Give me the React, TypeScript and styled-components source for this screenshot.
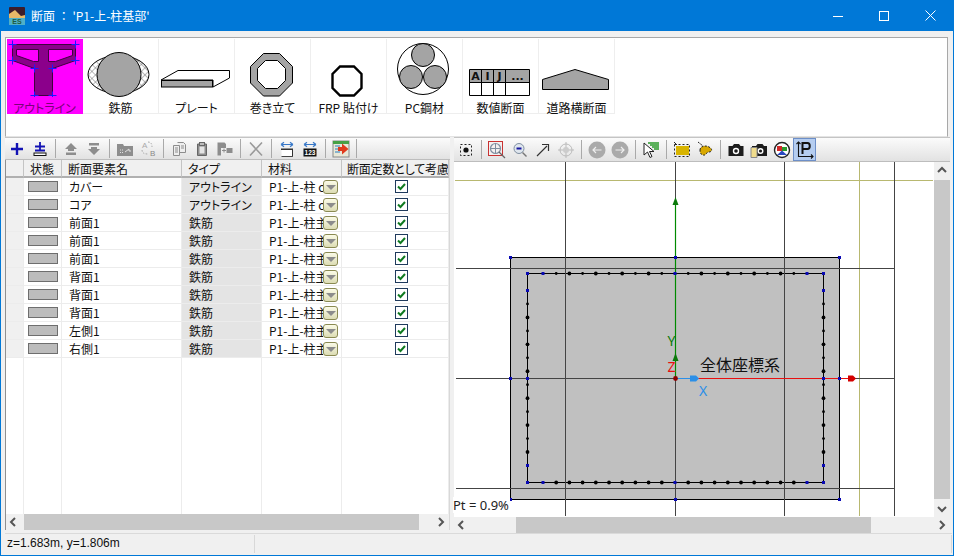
import styled, { createGlobalStyle } from "styled-components";
import { ReactNode } from "react";

const GlobalStyle = createGlobalStyle`
    html, body {
        margin: 0;
        padding: 0;
        background: #f0f0f0;
        overflow: hidden;
    }
    * {
        box-sizing: border-box;
    }
`

const FONT = `"Noto Sans CJK JP", "Noto Sans", sans-serif`;

const Window = styled.div`
    width: 954px;
    height: 556px;
    display: flex;
    flex-direction: column;
    background: #f0f0f0;
    border: 1px solid #0078d7;
    border-top: 0;
    font-family: ${FONT};
    font-feature-settings: "palt";
    font-size: 12px;
    color: #111;
`

const TitleBar = styled.header`
    height: 31px;
    flex: none;
    margin: 0 -1px;
    padding-left: 9px;
    display: flex;
    align-items: center;
    background: #0078d7;
    color: #fff;
`

const TitleText = styled.span`
    flex: 1;
    margin-left: 6px;
    font-size: 12px;
    font-feature-settings: normal;
    line-height: 31px;
`

const CaptionButtons = styled.div`
    display: flex;
    margin-right: 1px;
`

const CaptionButton = styled.button`
    width: 46px;
    height: 31px;
    border: 0;
    padding: 0;
    background: transparent;
    display: flex;
    align-items: center;
    justify-content: center;
`

const Ribbon = styled.nav`
    height: 100px;
    flex: none;
    margin: 6px 5px 0 4px;
    padding: 1px 0 0 1px;
    display: flex;
    align-items: flex-start;
    background: #fff;
    border: 1px solid #a8a8a8;
    border-bottom-color: #e4e4e4;
`

const RibbonItem = styled.div<{ $active?: boolean }>`
    width: 76px;
    height: 75px;
    display: flex;
    flex-direction: column;
    align-items: center;
    background: ${({ $active }) => ($active ? "#ff00ff" : "#fff")};
    color: ${({ $active }) => ($active ? "#7a007a" : "#111")};
    border-right: 1px solid ${({ $active }) => ($active ? "#ff00ff" : "#eeeeee")};
    border-bottom: 1px solid ${({ $active }) => ($active ? "#ff00ff" : "#eeeeee")};
    svg {
        display: block;
        flex: none;
    }
`

const RibbonLabel = styled.span`
    font-size: 12px;
    line-height: 14px;
    margin-top: 4px;
    white-space: nowrap;
`

const Split = styled.main`
    flex: 1;
    min-height: 0;
    display: grid;
    grid-template-columns: 445px 496px;
    column-gap: 4px;
    margin: 0 4px 0 4px;
`

const Pane = styled.section`
    min-width: 0;
    min-height: 0;
    display: flex;
    flex-direction: column;
`

const ToolBar = styled.div<{ $tall?: boolean }>`
    height: ${({ $tall }) => ($tall ? "25px" : "23px")};
    flex: none;
    display: flex;
    align-items: center;
    background: linear-gradient(#fbfbfb, #e2e2e2);
    border-top: 1px solid #c4c4c4;
    border-bottom: 1px solid #bdbdbd;
`

const ToolButton = styled.div<{ $on?: boolean }>`
    width: 23px;
    height: ${({ $on }) => ($on ? "23px" : "21px")};
    flex: none;
    display: flex;
    align-items: center;
    justify-content: center;
    background: ${({ $on }) => ($on ? "#b5cdf0" : "transparent")};
    border: 1px solid ${({ $on }) => ($on ? "#6d8fc8" : "transparent")};
`

const ToolSep = styled.div`
    width: 8px;
    height: 19px;
    flex: none;
    display: flex;
    justify-content: center;
    &:after {
        content: "";
        width: 1px;
        height: 100%;
        background: #a9a9a9;
    }
`

const GridFrame = styled.div`
    flex: 1;
    min-height: 0;
    display: flex;
    flex-direction: column;
    background: #fff;
    border-left: 1px solid #8f8f8f;
    border-right: 1px solid #d8d8d8;
`

const Row = styled.div<{ $fill?: boolean }>`
    display: grid;
    grid-template-columns: 18px 38px 120px 80px 80px 107px;
    height: 18px;
    flex: ${({ $fill }) => ($fill ? "1" : "none")};
`

const HeadCell = styled.div<{ $tight?: boolean }>`
    padding-left: ${({ $tight }) => ($tight ? "5px" : "6px")};
    line-height: 18px;
    letter-spacing: ${({ $tight }) => ($tight ? "-0.2px" : "0")};
    white-space: nowrap;
    overflow: hidden;
    background: #f0f0f0;
    border-right: 1px solid #c4c4c4;
    border-bottom: 2px solid #b0b0b0;
`

const Cell = styled.div<{ $tone?: "head" | "type" }>`
    padding-left: 7px;
    line-height: 17px;
    white-space: nowrap;
    overflow: hidden;
    position: relative;
    display: flex;
    align-items: center;
    background: ${({ $tone }) => ($tone === "head" ? "#f0f0f0" : $tone === "type" ? "#e4e4e4" : "#fff")};
    border-right: 1px solid #ececec;
    border-bottom: 1px solid #ececec;
`

const EmptyCell = styled.div`
    background: #fff;
    border-right: 1px solid #ececec;
`

const Swatch = styled.div`
    width: 30px;
    height: 11px;
    margin-left: -3px;
    background: #bcbcbc;
    border: 1px solid #6e6e6e;
`

const MaterialText = styled.span`
    display: block;
    width: 54px;
    overflow: hidden;
`

const DropButton = styled.div`
    position: absolute;
    right: 3px;
    top: 2px;
    width: 15px;
    height: 14px;
    display: flex;
    align-items: center;
    justify-content: center;
    background: linear-gradient(#fbfbe8, #dcdcb4);
    border: 1px solid #8a8a52;
    border-radius: 3px;
    &:after {
        content: "";
        border-top: 5px solid #8c8c8c;
        border-left: 5px solid transparent;
        border-right: 5px solid transparent;
    }
`

const CheckBox = styled.div`
    width: 13px;
    height: 13px;
    margin: 0 auto;
    position: relative;
    left: 3px;
    display: flex;
    background: #fff;
    border: 1px solid #1f3a5c;
`

const ScrollBar = styled.div<{ $vertical?: boolean }>`
    flex: none;
    display: flex;
    flex-direction: ${({ $vertical }) => ($vertical ? "column" : "row")};
    width: ${({ $vertical }) => ($vertical ? "16px" : "auto")};
    height: ${({ $vertical }) => ($vertical ? "auto" : "16px")};
    background: #f0f0f0;
`

const ScrollArrow = styled.div`
    flex: none;
    width: 16px;
    height: 16px;
    display: flex;
    align-items: center;
    justify-content: center;
`

const ScrollTrack = styled.div<{ $vertical?: boolean; $before: number; $after: number }>`
    flex: 1;
    min-width: 0;
    min-height: 0;
    margin: ${({ $vertical, $before, $after }) =>
        $vertical ? `${$before}px 0 ${$after}px` : `0 ${$after}px 0 ${$before}px`};
    background: #c8c8c8;
`

const LeftScroll = styled(ScrollBar)`
    margin: 0 0 3px;
    border-left: 1px solid #8f8f8f;
    border-right: 1px solid #d8d8d8;
`

const CanvasRow = styled.div`
    flex: 1;
    min-height: 0;
    display: flex;
`

const Canvas = styled.div`
    flex: 1;
    position: relative;
    background: #fff;
    svg {
        display: block;
    }
`

const RatioLabel = styled.span`
    position: absolute;
    left: -1px;
    bottom: 4px;
    padding: 0 1px 0 0;
    background: #fff;
    font-family: "Noto Sans", sans-serif;
    font-size: 13px;
    line-height: 16px;
    color: #222;
`

const StatusBar = styled.footer`
    height: 20px;
    flex: none;
    margin: 0 1px 2px 4px;
    display: flex;
    align-items: center;
    background: #f0f0f0;
    border-top: 1px solid #dadada;
`

const StatusCell = styled.div<{ $width?: number }>`
    width: ${({ $width }) => ($width ? `${$width}px` : "auto")};
    flex: ${({ $width }) => ($width ? "none" : "1")};
    height: 18px;
    padding-left: 2px;
    line-height: 17px;
    font-family: "Liberation Sans", sans-serif;
    font-size: 12px;
    border-right: 1px solid #d8d8d8;
`

const Ico = ({ children, w = 16, h = 16 }: { children: ReactNode; w?: number; h?: number }) => (
    <svg width={w} height={h} viewBox={`0 0 ${w} ${h}`}>{children}</svg>
);

const Shot = ({ x, children }: { x: number; children: ReactNode }) => (
    <svg width={76} height={58} viewBox={`${x} 39 76 58`}>{children}</svg>
);

const Cross = ({ x, y }: { x: number; y: number }) => (
    <path d={`M${x - 4} ${y}h8M${x} ${y - 4}v8`} stroke="#1a1aff" strokeWidth="1" />
);

const ribbon = [
    {
        label: "アウトライン", x: 7, active: true, art: (
            <>
                <path d="M12.5 44.5H75.5V60.5L52.5 68.5V95.5H34.5V68.5L12.5 60.5Z" fill="#8b008b" stroke="#400040" strokeWidth="1" />
                <path d="M16.5 49.5H38.5V61.5H33.5L16.5 55.5Z M48.5 49.5H72.5V55.5L55.5 61.5H48.5Z" fill="#ff00ff" stroke="#400040" strokeWidth="1" />
                <Cross x={12.5} y={44.5} /><Cross x={75.5} y={44.5} /><Cross x={12.5} y={60.5} /><Cross x={75.5} y={60.5} />
                <Cross x={34.5} y={68.5} /><Cross x={52.5} y={68.5} /><Cross x={34.5} y={95.5} /><Cross x={52.5} y={95.5} />
            </>
        )
    },
    {
        label: "鉄筋", x: 83, art: (
            <>
                <defs>
                    <pattern id="hatch" width="5" height="5" patternUnits="userSpaceOnUse" patternTransform="rotate(45)">
                        <path d="M0 0H5M0 0V5" stroke="#555" strokeWidth="0.8" />
                    </pattern>
                </defs>
                <ellipse cx="118.5" cy="74.5" rx="30.5" ry="19" fill="url(#hatch)" stroke="#000" />
                <circle cx="119" cy="74.5" r="22" fill="#a4a4a4" stroke="#000" />
            </>
        )
    },
    {
        label: "プレート", x: 159, art: (
            <>
                <path d="M161 80L178 70.5H229.5V78L213 87V80Z" fill="#fff" stroke="#000" />
                <rect x="161.5" y="80.5" width="51" height="6.5" fill="#a4a4a4" stroke="#000" />
            </>
        )
    },
    {
        label: "巻き立て", x: 235, art: (
            <path fillRule="evenodd" d="M263.5 53.5H279.5L292.5 66.5V83L279.5 96H263.5L250.5 83V66.5Z M265.5 60.5H277.5L285.5 68.5V80.5L277.5 88.5H265.5L257.5 80.5V68.5Z" fill="#a4a4a4" stroke="#000" />
        )
    },
    {
        label: "FRP 貼付け", x: 311, art: (
            <path d="M340 66.5H354L361.5 74V88L354 95.5H340L332.5 88V74Z" fill="#fff" stroke="#000" strokeWidth="2.4" />
        )
    },
    {
        label: "PC鋼材", x: 387, art: (
            <>
                <circle cx="423" cy="69" r="25.5" fill="#fff" stroke="#000" />
                <circle cx="423" cy="55" r="11.5" fill="#a4a4a4" stroke="#000" />
                <circle cx="411" cy="77" r="11.5" fill="#a4a4a4" stroke="#000" />
                <circle cx="435" cy="77" r="11.5" fill="#a4a4a4" stroke="#000" />
            </>
        )
    },
    {
        label: "数値断面", x: 463, art: (
            <>
                <rect x="469.5" y="69.5" width="60" height="13" fill="#a4a4a4" />
                <path d="M469.5 69.5H529.5V95.5H469.5ZM469.5 82.5H529.5M481.5 69.5V95.5M493.5 69.5V95.5M505.5 69.5V95.5" fill="none" stroke="#000" />
                <g fontFamily='"DejaVu Sans", sans-serif' fontWeight="bold" fontSize="11" textAnchor="middle" fill="#111">
                    <text x="475.5" y="80">A</text>
                    <text x="487.5" y="80">I</text>
                    <text x="499.5" y="80">J</text>
                    <text x="517.5" y="80">...</text>
                </g>
            </>
        )
    },
    {
        label: "道路横断面", x: 539, art: (
            <path d="M542.5 79.5L575 69.5L608.5 79.5V89.5H542.5Z" fill="#a4a4a4" stroke="#000" />
        )
    },
];

const rows = [
    ["カバー", "アウトライン", "P1-上-柱 c"],
    ["コア", "アウトライン", "P1-上-柱 c"],
    ["前面1", "鉄筋", "P1-上-柱主"],
    ["前面1", "鉄筋", "P1-上-柱主"],
    ["前面1", "鉄筋", "P1-上-柱主"],
    ["背面1", "鉄筋", "P1-上-柱主"],
    ["背面1", "鉄筋", "P1-上-柱主"],
    ["背面1", "鉄筋", "P1-上-柱主"],
    ["左側1", "鉄筋", "P1-上-柱主"],
    ["右側1", "鉄筋", "P1-上-柱主"],
];

const GRAY = "#8d8d8d";

const leftTools: (ReactNode | null)[] = [
    <Ico><path d="M8 2V14M2 8H14" stroke="#1212b4" strokeWidth="2.4" /></Ico>,
    <Ico><path d="M8 1V10M3 5.5H13M3 9.5H13" stroke="#1212b4" strokeWidth="1.8" /><rect x="2" y="12" width="12" height="2.5" fill="#fff" stroke="#111" strokeWidth="1" /></Ico>,
    null,
    <Ico><path d="M8 2L14 8H11V10H5V8H2Z M3 11.5H13V14H3Z" fill={GRAY} /></Ico>,
    <Ico><path d="M8 14L14 8H11V6H5V8H2Z M3 2H13V4.5H3Z" fill={GRAY} /></Ico>,
    null,
    <Ico w={18} h={16}><path d="M1 3H7L8 5H17V15H1Z" fill={GRAY} /><path d="M4 9H8M4 11.5H8" stroke="#e0e0e0" strokeDasharray="1 1" /><path d="M9 11L13 8V10H15" stroke="#e0e0e0" fill="none" /></Ico>,
    <Ico w={18} h={18}><text x="3" y="8" fontSize="8" fontFamily="Liberation Sans" fill="#aaa">A</text><text x="11" y="16" fontSize="8" fontFamily="Liberation Sans" fill="#888">B</text><path d="M9 2C12 2 13 4 13 7M3 10C3 13 5 14 9 14" fill="none" stroke="#aaa" strokeDasharray="1.5 1.5" /></Ico>,
    null,
    <Ico><path d="M2.5 4.5H8.5V14.5H2.5Z M6.5 1.5H12.5L14.5 3.5V11.5H8.5" fill="#eee" stroke={GRAY} /><path d="M4 7H7M4 9H7M4 11H7M10 5H13M10 7H13" stroke={GRAY} /></Ico>,
    <Ico><path d="M3.5 3H12.5V14.5H3.5Z" fill={GRAY} stroke="#666" /><rect x="5.5" y="5.5" width="5" height="7" fill="#e4e4e4" /><rect x="5.5" y="1.5" width="5" height="3" fill="#bbb" stroke="#666" /></Ico>,
    <Ico w={18} h={16}><path d="M1.5 1.5H8.5L10 3V7H5V14.5H1.5Z" fill={GRAY} /><path d="M6 9.5H10M8 7.5V11.5" stroke={GRAY} /><rect x="10.5" y="7" width="6" height="5" fill={GRAY} /></Ico>,
    null,
    <Ico w={18} h={16}><path d="M3 1.5L15 14.5M15 1.5L3 14.5" stroke="#9a9a9a" strokeWidth="1.6" /></Ico>,
    null,
    <Ico><path d="M2 3.5H14M2 3.5L5 1.2M2 3.5L5 5.8M14 3.5L11 1.2M14 3.5L11 5.8" stroke="#3878c8" fill="none" strokeWidth="1.2" /><path d="M2.5 8.5H13.5V15.5H2.5" fill="#fff" stroke="#444" /><rect x="2" y="7.5" width="12" height="1.5" fill="#333" /><path d="M13.5 8V15.5" stroke="#333" /></Ico>,
    <Ico><path d="M2 3.5H14M2 3.5L5 1.2M2 3.5L5 5.8M14 3.5L11 1.2M14 3.5L11 5.8" stroke="#3878c8" fill="none" strokeWidth="1.2" /><rect x="1.5" y="7.5" width="13" height="8" fill="#111" /><text x="2.6" y="14.4" fontSize="6.5" fontWeight="bold" fontFamily="Liberation Sans" fill="#fff">123</text></Ico>,
    null,
    <Ico w={18} h={18}><rect x="1" y="1" width="16" height="16" fill="#e8e8d8" stroke="#888" /><rect x="1" y="1" width="16" height="3" fill="#46a046" /><path d="M3 6H8M3 9H8M3 12H8" stroke="#6aa0c8" strokeWidth="1.5" /><path d="M6 7H10V3.5L16.5 9L10 14.5V11H6Z" fill="#e03a1c" /></Ico>,
    null,
];

const BLUEGRAY = "#7e8ea0";

const rightTools: ReactNode[] = [
    <Ico><rect x="2.5" y="2.5" width="11" height="11" fill="none" stroke="#222" strokeDasharray="2 2" /><circle cx="8" cy="8" r="2.6" fill="#111" /></Ico>,
    null,
    <Ico w={18} h={18}><rect x="0.5" y="0.5" width="14" height="14" fill="#f4f0f0" stroke="#c83232" /><circle cx="7.5" cy="7.5" r="5" fill="none" stroke={BLUEGRAY} strokeWidth="1.2" /><path d="M2.5 7.5H12.5M7.5 2.5V12.5" stroke={BLUEGRAY} /><path d="M11 11L17 17" stroke="#666" strokeWidth="1.2" /></Ico>,
    <Ico><circle cx="7" cy="6.5" r="5" fill="#dfe6ee" stroke={BLUEGRAY} /><path d="M4.5 6.5H9.5" stroke="#1616a0" strokeWidth="2" /><path d="M10.5 10.5L14.5 14.5" stroke="#777" strokeWidth="1.4" /></Ico>,
    <Ico><path d="M2 14L12 4M7 2.5H13.5V9" fill="none" stroke="#333" strokeWidth="1.2" /></Ico>,
    <Ico w={18} h={18}><circle cx="9" cy="9" r="6" fill="none" stroke="#bbb" /><path d="M1 9H17M9 1V17" stroke="#bbb" /><circle cx="9" cy="9" r="3" fill="#ccc" /></Ico>,
    null,
    <Ico w={18} h={18}><circle cx="9" cy="9" r="8.5" fill="#aaa" /><path d="M13.5 9H5M8 6L5 9L8 12" fill="none" stroke="#eee" strokeWidth="1.2" /></Ico>,
    <Ico w={18} h={18}><circle cx="9" cy="9" r="8.5" fill="#aaa" /><path d="M4.5 9H13M10 6L13 9L10 12" fill="none" stroke="#eee" strokeWidth="1.2" /></Ico>,
    null,
    <Ico w={18} h={18}><path d="M2 2L2 14L5.5 11L8 16.5L10 15.5L7.5 10.5H12Z" fill="#fff" stroke="#222" /><path d="M6 2H17M8 4H17M10 6H17M12 8H17" stroke="#2a9a2a" strokeWidth="1.3" /></Ico>,
    null,
    <Ico w={18} h={18}><rect x="3" y="5" width="13" height="9" fill="#d8b400" /><path d="M1.5 3.5H16.5V15.5H1.5Z" fill="none" stroke="#222" strokeDasharray="2 2" /><path d="M1 1L4 4" stroke="#222" /></Ico>,
    <Ico w={18} h={18}><path d="M4 9C4 5 10 4 13 6C17 8 16 11 13 11C10 11 10 15 7 14C4 13 4 11 4 9Z" fill="#d8a800" stroke="#222" strokeDasharray="2 1.4" /><path d="M2 1L7 5" stroke="#222" strokeDasharray="2 1" /></Ico>,
    null,
    <Ico w={18} h={18}><path d="M1.5 5H5.5L7 3H12L13.5 5H16.5V15H1.5Z" fill="#1c1c1c" /><circle cx="9" cy="10" r="3.2" fill="#fff" /><circle cx="9" cy="10" r="1.8" fill="#1c1c1c" /></Ico>,
    <Ico w={18} h={18}><path d="M2 5H6L7.5 3H12.5L14 5H17V15H2Z" fill="#1c1c1c" /><circle cx="10.5" cy="10" r="3" fill="#fff" /><circle cx="10.5" cy="10" r="1.6" fill="#1c1c1c" /><path d="M1 6.5H7V16.5H1Z" fill="#f0dc8c" stroke="#888" /></Ico>,
    <Ico w={18} h={18}><circle cx="9" cy="9" r="7.5" fill="#fff" stroke="#222" strokeWidth="1.4" /><rect x="4" y="5" width="5" height="5" fill="#d02828" /><rect x="9" y="6" width="5" height="4" fill="#2a9a2a" /><path d="M4 14L9 9.5L14 14Z" fill="#2848c0" /></Ico>,
];

const Dot = ({ x, y, blue, r = 1.7 }: { x: number; y: number; blue?: boolean; r?: number }) =>
    blue ? <rect x={x - 1.5} y={y - 1.5} width="3" height="3" fill="#0a0ab4" /> : <circle cx={x} cy={y} r={r} fill="#000" />;

const xs = Array.from({ length: 21 }, (_, i) => 543 + i * 13.2);
const ys = Array.from({ length: 14 }, (_, i) => 290.5 + i * 13.46);

const Section = () => (
    <svg width="479" height="354" viewBox="454 162 479 354">
        <path d="M510.5 257.5H839.5V499.5H510.5Z" fill="#c0c0c0" stroke="#000" strokeWidth="1" />
        <path d="M527.5 273.5H823.5V482.5H527.5Z" fill="none" stroke="#000" strokeWidth="1" />
        <path d="M455 180.5H933M859.5 162V516" stroke="#b8b870" strokeWidth="1" />
        <path d="M565.5 162V516M675.5 162V516M784.5 162V516M894.5 162V516M456 268.5H894M456 378.5H894M456 488.5H894" stroke="#444" strokeWidth="1" fill="none" />
        <path d="M675.5 378V203" stroke="#008a00" strokeWidth="1.2" />
        <path d="M675.5 197L672.5 205H678.5Z M675.5 353L672.5 361H678.5Z" fill="#0a7a0a" />
        <path d="M675 378.5H695" stroke="#2b8fe8" strokeWidth="1" />
        <path d="M695 378.5H850" stroke="#e81010" strokeWidth="1" />
        <path d="M696 375.5L690 375.5V381.5L696 381.5L699 378.5Z" fill="#2b8fe8" />
        <path d="M848 375.5V381.5H853L856 378.5L853 375.5Z" fill="#d40000" />
        {xs.map((x, i) => (
            <Dot key={`t${i}`} x={x} y={273.5} blue={i === 0 || i === 10 || i === 20} r={i % 2 ? 1.4 : 1.9} />
        ))}
        {xs.map((x, i) => (
            <Dot key={`b${i}`} x={x} y={482.5} blue={i === 0 || i === 10 || i === 20} r={1.9} />
        ))}
        {ys.map((y, i) => (
            <Dot key={`l${i}`} x={527.5} y={y} blue={i === 0 || i === 13} r={i % 2 ? 1.4 : 1.9} />
        ))}
        {ys.map((y, i) => (
            <Dot key={`r${i}`} x={823.5} y={y} blue={i === 0 || i === 13} r={i % 2 ? 1.4 : 1.9} />
        ))}
        {[[527.5, 273.5], [823.5, 273.5], [527.5, 482.5], [823.5, 482.5], [527.5, 378.5], [823.5, 378.5],
          [510.5, 257.5], [675.5, 257.5], [839.5, 257.5], [510.5, 378.5], [839.5, 378.5],
          [510.5, 499.5], [675.5, 499.5], [839.5, 499.5]].map(([x, y]) => (
            <Dot key={`${x}-${y}`} x={x} y={y} blue />
        ))}
        <circle cx="675.5" cy="378.5" r="2.4" fill="#8b0000" />
        <g fontFamily='"Noto Sans", sans-serif' fontSize="14" textAnchor="middle">
            <text x="671.5" y="346" fill="#0a7a0a">Y</text>
            <text x="671.5" y="372" fill="#e81010">Z</text>
            <text x="703" y="396" fill="#2b8fe8">X</text>
        </g>
        <text x="700" y="371" fontFamily={FONT} fontSize="16" fill="#111">全体座標系</text>
    </svg>
);

const Chevron = ({ dir }: { dir: "l" | "r" | "u" | "d" }) => {
    const paths = { l: "M7 2L3 6L7 10", r: "M4 2L8 6L4 10", u: "M2 8L6 4L10 8", d: "M2 4L6 8L10 4" };
    return <svg width="12" height="12" viewBox="0 0 12 12"><path d={paths[dir]} fill="none" stroke="#555" strokeWidth="2" /></svg>;
};

const App = () => {
    return <>
        <GlobalStyle />
        <Window>
            <TitleBar>
                <svg width="16" height="18" viewBox="0 0 16 18">
                    <rect width="16" height="18" rx="1" fill="#3c1c2c" />
                    <path d="M0 12V7L6 3L12 9L16 8V12Z" fill="#e8b868" />
                    <rect y="11" width="16" height="7" fill="#4fb0c8" />
                    <text x="8" y="17" textAnchor="middle" fontSize="7" fontWeight="bold" fontFamily="Liberation Sans" fill="#1c5a40">ES</text>
                </svg>
                <TitleText>断面 ： 'P1-上-柱基部'</TitleText>
                <CaptionButtons>
                    <CaptionButton>
                        <svg width="10" height="10"><path d="M0 5.5H10" stroke="#fff" /></svg>
                    </CaptionButton>
                    <CaptionButton>
                        <svg width="10" height="10"><rect x="0.5" y="0.5" width="9" height="9" fill="none" stroke="#fff" /></svg>
                    </CaptionButton>
                    <CaptionButton>
                        <svg width="11" height="11"><path d="M0.5 0.5L10.5 10.5M10.5 0.5L0.5 10.5" stroke="#fff" /></svg>
                    </CaptionButton>
                </CaptionButtons>
            </TitleBar>
            <Ribbon>
                {ribbon.map((item) => (
                    <RibbonItem key={item.label} $active={item.active}>
                        <Shot x={item.x}>{item.art}</Shot>
                        <RibbonLabel>{item.label}</RibbonLabel>
                    </RibbonItem>
                ))}
            </Ribbon>
            <Split>
                <Pane>
                    <ToolBar>
                        {leftTools.map((tool, i) =>
                            tool ? <ToolButton key={i}>{tool}</ToolButton> : <ToolSep key={i} />
                        )}
                    </ToolBar>
                    <GridFrame>
                        <Row>
                            <HeadCell />
                            <HeadCell>状態</HeadCell>
                            <HeadCell>断面要素名</HeadCell>
                            <HeadCell>タイプ</HeadCell>
                            <HeadCell>材料</HeadCell>
                            <HeadCell $tight>断面定数として考慮</HeadCell>
                        </Row>
                        {rows.map(([name, type, material], i) => (
                            <Row key={i}>
                                <Cell $tone="head" />
                                <Cell><Swatch /></Cell>
                                <Cell>{name}</Cell>
                                <Cell $tone="type">{type}</Cell>
                                <Cell><MaterialText>{material}</MaterialText><DropButton /></Cell>
                                <Cell>
                                    <CheckBox>
                                        <svg width="11" height="11" viewBox="0 0 11 11">
                                            <path d="M2 5.5L4.5 8L9 3" fill="none" stroke="#0f7a20" strokeWidth="2" />
                                        </svg>
                                    </CheckBox>
                                </Cell>
                            </Row>
                        ))}
                        <Row $fill>
                            <EmptyCell /><EmptyCell /><EmptyCell /><EmptyCell /><EmptyCell /><EmptyCell />
                        </Row>
                    </GridFrame>
                    <LeftScroll>
                        <ScrollArrow><Chevron dir="l" /></ScrollArrow>
                        <ScrollTrack $before={2} $after={14} />
                        <ScrollArrow><Chevron dir="r" /></ScrollArrow>
                    </LeftScroll>
                </Pane>
                <Pane>
                    <ToolBar $tall>
                        {rightTools.map((tool, i) =>
                            tool ? <ToolButton key={i}>{tool}</ToolButton> : <ToolSep key={i} />
                        )}
                        <ToolButton $on>
                            <Ico w={19} h={18}>
                                <path d="M3.5 1V16M1.5 3L3.5 1L5.5 3M3.5 15.5H18M16 13.5L18 15.5L16 17.5" fill="none" stroke="#111" strokeWidth="1.1" />
                                <path d="M7.5 13V2H12.5C15.5 2 15.5 8 12.5 8H7.5" fill="none" stroke="#111" strokeWidth="2" />
                            </Ico>
                        </ToolButton>
                    </ToolBar>
                    <CanvasRow>
                        <Canvas>
                            <Section />
                            <RatioLabel>Pt = 0.9%</RatioLabel>
                        </Canvas>
                        <ScrollBar $vertical>
                            <ScrollArrow><Chevron dir="u" /></ScrollArrow>
                            <ScrollTrack $vertical $before={2} $after={2} />
                            <ScrollArrow><Chevron dir="d" /></ScrollArrow>
                        </ScrollBar>
                    </CanvasRow>
                    <ScrollBar>
                        <ScrollArrow><Chevron dir="l" /></ScrollArrow>
                        <ScrollTrack $before={46} $after={63} />
                        <ScrollArrow><Chevron dir="r" /></ScrollArrow>
                    </ScrollBar>
                </Pane>
            </Split>
            <StatusBar>
                <StatusCell $width={250}>z=1.683m, y=1.806m</StatusCell>
                <StatusCell />
            </StatusBar>
        </Window>
    </>
}

export default App;
